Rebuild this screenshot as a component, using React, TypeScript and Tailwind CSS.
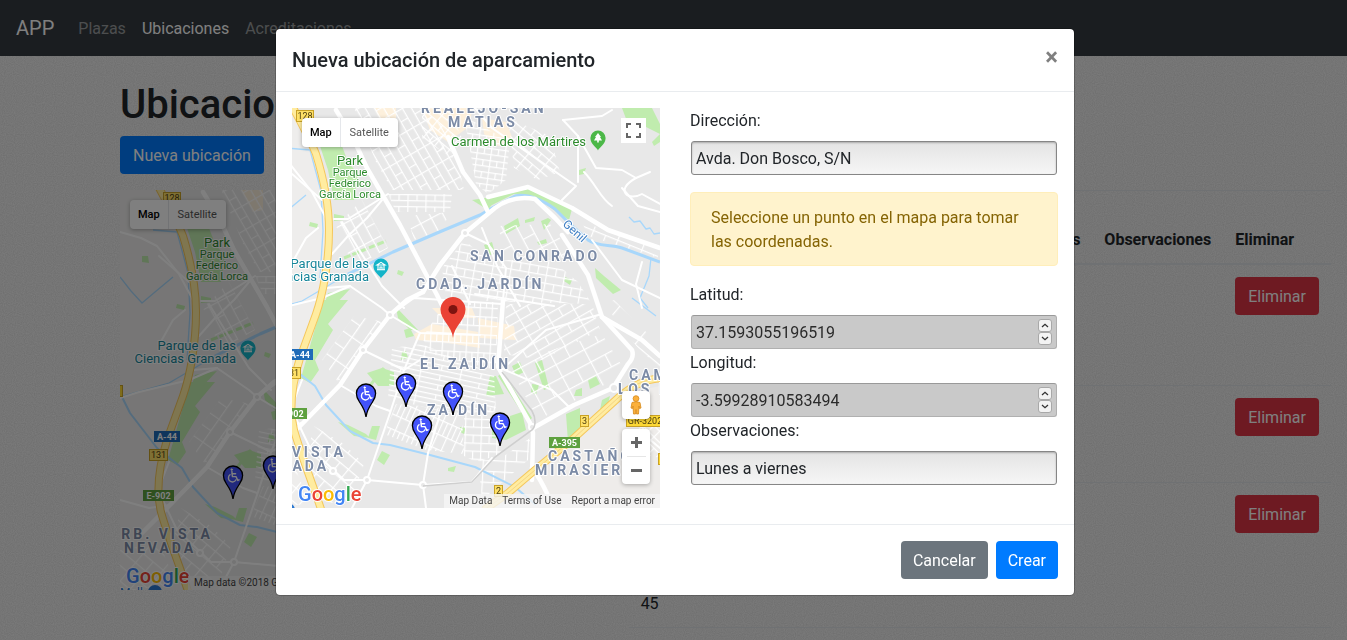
import React from "react";

type Pt = { x: number; y: number };

const streetBlocks = [
  { points: "62,0 130,0 150,18 165,50 172,82 100,82 84,54", angle: 60, w: 11, h: 8 },
  { points: "130,0 156,0 170,30 160,50 130,30", angle: 40, w: 7, h: 7 },
  { points: "96,86 160,86 158,104 104,104", angle: 1, w: 9, h: 6 },
  { points: "44,118 70,92 96,140 62,160", angle: 62, w: 14, h: 10 },
  { points: "115,108 160,104 146,124 122,132", angle: 62, w: 18, h: 12 },
  { points: "172,8 218,34 214,72 196,86 184,76", angle: 8, w: 7, h: 6 },
  { points: "216,10 258,28 268,64 246,72 222,60", angle: 40, w: 10, h: 7 },
  { points: "150,160 172,132 196,152 260,152 286,174 300,196 154,192", angle: 10, w: 9, h: 8 },
  { points: "206,118 258,116 282,150 214,150", angle: 62, w: 16, h: 13 },
  { points: "154,194 206,194 204,262 140,246 130,230", angle: 3, w: 6, h: 9 },
  { points: "214,196 300,196 308,222 250,252 212,246", angle: -30, w: 13, h: 9 },
  { points: "216,256 310,226 330,258 314,276 246,312", angle: -28, w: 16, h: 14 },
  { points: "100,240 130,236 202,266 204,304 160,306 96,290", angle: 12, w: 20, h: 5 },
  { points: "104,296 150,300 170,306 172,346 134,342 92,326", angle: 24, w: 5, h: 14 },
  { points: "172,300 200,300 210,346 184,354 172,348", angle: 2, w: 8, h: 8 },
  { points: "22,318 52,336 72,356 60,392 30,396 14,350", angle: 40, w: 11, h: 12 },
  { points: "30,252 62,208 92,214 68,246 46,274", angle: -55, w: 14, h: 12 },
  { points: "290,114 366,140 366,150 296,128", angle: 22, w: 13, h: 10 },
  { points: "342,310 368,318 368,350 352,346", angle: 45, w: 8, h: 8 },
  { points: "186,352 206,352 238,330 236,352 190,392", angle: 3, w: 11, h: 11 },
  { points: "312,196 322,192 368,238 368,260 346,240", angle: 40, w: 18, h: 20 },
  { points: "-39,360 0,352 18,396 -39,400", angle: 40, w: 13, h: 12 },
];

const greens = [
  "28,38 50,38 56,54 66,66 62,92 42,92 36,62",
  "31,192 56,192 36,216 41,222 23,252 27,262 18,275 9,270",
  "36,185 58,181 42,198 32,198",
  "75,265 90,260 102,264 102,278 86,278",
  "46,314 56,317 74,326 78,330 62,328",
  "80,318 88,318 84,332 76,330",
  "90,343 98,347 92,357 85,352",
  "104,199 126,222 118,222 106,210",
  "112,222 118,220 122,228 114,230",
  "110,244 114,243 116,250 109,252",
  "194,90 236,81 280,101 277,112 262,102 242,88 222,86 198,98",
  "212,118 226,110 228,118 214,126",
  "233,112 243,109 242,113 233,115",
  "249,113 256,110 259,112 252,122",
  "192,137 200,134 203,145 196,148",
  "245,134 254,131 255,135 247,137",
  "303,160 312,168 329,182 321,186 304,170",
  "273,169 280,172 278,177 272,173",
  "287,62 294,60 292,66 287,67",
  "330,0 360,0 368,16 368,26 352,18 336,16",
  "360,34 368,26 368,34 362,38",
  "220,258 228,254 232,264 224,268",
  "243,255 250,252 257,280 252,282",
  "240,276 247,277 244,287 239,284",
  "296,272 304,268 308,276 298,281",
  "284,282 290,280 290,288 282,288",
  "198,268 204,268 212,286 194,288",
  "211,264 240,310 236,314 206,268",
  "218,308 230,304 234,322 214,332 200,330 200,318 216,320",
  "274,306 288,300 288,310 296,320 276,334",
  "310,292 318,288 316,296 308,302",
  "168,319 174,320 172,326 168,324",
  "156,360 164,358 162,364 156,363",
  "42,106 52,108 52,112 42,113",
  "106,162 112,164 110,168 105,166",
  "-17,66 -11,66 -10,73 -17,72",
  "18,114 26,116 25,120 17,118",
];

const commercial = [
  "122,226 140,216 186,224 188,240 150,234 124,232",
  "82,0 104,0 104,20 94,22",
  "130,0 180,0 178,18 156,34 138,22",
  "190,10 214,14 222,34 206,38 192,26",
  "186,210 222,218 224,232 188,230",
  "140,200 180,200 184,210 150,210",
];

const mainRoads = [
  "M44,2 L61,30 L75,60 L108,117 L145,187 L158,214",
  "M156,29 L171,64 L188,87 L196,104",
  "M131,184 L115,192 L98,207 L71,242 L48,277 L11,315 L-20,346",
  "M131,184 L148,157 L173,125 L203,100 C214,92 228,88 243,91 L263,110 L276,124",
  "M196,89 L236,79 L280,100 L316,122 L368,140",
  "M270,127 L296,167 L306,197 L310,209 L340,242 C342,248 340,252 336,256 L321,280",
  "M211,192 L206,259 L238,315 L241,325 L240,372",
  "M321,280 L282,297 L243,319",
  "M310,209 L350,232 L368,248",
  "M240,360 C250,372 254,384 262,400",
];

const midRoads = [
  "M98,207 L128,225 L188,227",
  "M128,225 L112,262 L98,305 L75,372 L60,400",
  "M71,242 L112,262 L128,252",
  "M48,277 L84,298 L98,303",
  "M75,372 L131,377 L180,374 L200,350",
  "M136,345 L131,377 L134,400",
  "M34,180 L58,178 L90,200 L98,207",
  "M-39,208 L-20,202 L30,190 L58,178",
  "M42,111 L56,111 L96,86",
  "M40,146 L56,128 L75,110 L90,92",
  "M50,114 L66,140 L90,178 L112,200",
  "M173,125 L196,136 L214,160 L211,192",
  "M108,200 L122,190 L210,196",
  "M183,186 L262,198",
  "M216,256 L254,222 L310,206",
  "M206,259 L260,282 L278,300",
  "M-39,42 L-18,48 L-2,56 L20,84 L34,110",
  "M-39,310 L-10,318 L11,315",
  "M0,66 L30,92",
  "M0,155 L14,130 L26,120",
  "M160,158 L178,196",
  "M190,120 L206,160 L228,198",
  "M183,0 L200,20 L284,78 L270,92",
  "M271,12 L286,28 L286,74",
  "M271,12 L310,8 L320,2",
  "M286,28 L304,60 L330,62 L344,70 C322,82 336,94 350,86 L368,96",
  "M292,64 C304,76 308,90 320,98",
  "M344,70 L358,64 M330,80 L346,98 L368,104",
  "M150,300 L136,345",
  "M10,272 L-1,300 L18,340 L52,372 L75,372",
  "M350,154 L344,176 L350,200",
  "M322,280 L340,300 L356,330 L368,340",
  "M300,132 L330,172 L368,190",
];

const labels = [
  { text: "REALEJO-SAN", x: 129, y: 5 },
  { text: "MATIAS", x: 156, y: 19 },
  { text: "SAN CONRADO", x: 178, y: 153 },
  { text: "CDAD. JARDÍN", x: 124, y: 181 },
  { text: "EL ZAIDÍN", x: 128, y: 261 },
  { text: "ZAIDÍN", x: 135, y: 307 },
  { text: "URB. VISTA", x: -50, y: 349 },
  { text: "NEVADA", x: -35, y: 363 },
  { text: "CASTAÑO", x: 256, y: 353 },
  { text: "MIRASIERRA", x: 243, y: 367 },
  { text: "CAMINO", x: 337, y: 272 },
  { text: "LOS LLANOS", x: 326, y: 286 },
];

const shields = [
  { text: "128", x: 4, y: 2, w: 18, kind: "yellow" },
  { text: "131", x: -10, y: 259, w: 19, kind: "yellow" },
  { text: "3", x: 288, y: 307, w: 9, kind: "yellow" },
  { text: "2", x: 202, y: 377, w: 9, kind: "yellow" },
  { text: "GR-3202", x: 334, y: 307, w: 38, kind: "gold" },
  { text: "", x: 366, y: 345, w: 20, kind: "gold" },
  { text: "", x: -56, y: 195, w: 20, kind: "gold" },
  { text: "A-44", x: -5, y: 241, w: 26, kind: "blue" },
  { text: "E-902", x: -16, y: 300, w: 31, kind: "green" },
  { text: "A-395", x: 257, y: 329, w: 31, kind: "green" },
];

const shieldFill: Record<string, string> = {
  yellow: "#ffe168",
  gold: "#fdd835",
  blue: "#1f6bb8",
  green: "#5ea13f",
};

const parkings: Pt[] = [
  { x: 74, y: 309 },
  { x: 114, y: 299 },
  { x: 161, y: 307 },
  { x: 130, y: 341 },
  { x: 208, y: 338 },
];

function ParkingPin({ x, y }: Pt) {
  return (
    <g transform={`translate(${x} ${y})`}>
      <path
        d="M0,0 C-0.8,-6 -3,-10 -6.5,-15 C-8.6,-18 -9.6,-20.4 -9.6,-23.4 A9.6,9.6 0 0 1 9.6,-23.4 C9.6,-20.4 8.6,-18 6.5,-15 C3,-10 0.8,-6 0,0 Z"
        fill="#4353fb"
        stroke="#000"
        strokeWidth="1.3"
      />
      <g fill="none" stroke="#fff" strokeWidth="1.4" strokeLinecap="round" strokeLinejoin="round">
        <circle cx="-1.3" cy="-29.4" r="0.9" fill="#fff" strokeWidth="0.6" />
        <path d="M-1.1,-27.6 L-0.6,-22.4 L3,-22.4 L4.8,-18.6 L6,-19.2" />
        <path d="M-0.8,-25.2 L2.6,-25.2" />
        <path d="M-3,-24.2 A4,4 0 1 0 3,-19.2" />
      </g>
    </g>
  );
}

function PoiPin({ x, y, color, tree }: Pt & { color: string; tree?: boolean }) {
  return (
    <g transform={`translate(${x} ${y})`}>
      <path
        d="M0,11.500 C-1,8.500 -7.600,5.500 -7.600,-1 A7.600,7.600 0 0 1 7.600,-1 C7.600,5.500 1,8.500 0,11.500 Z"
        fill={color}
      />
      {tree ? (
        <path d="M0,-6 L3,-2 L2,-2 L4,1.500 L0.800,1.500 L0.800,3.500 L-0.800,3.500 L-0.800,1.500 L-4,1.500 L-2,-2 L-3,-2 Z" fill="#fff" />
      ) : (
        <path
          d="M-4,-2 L0,-4.600 L4,-2 Z M-3,-2 L-3,2.500 M3,-2 L3,2.500 M-4,2.800 L4,2.800 M-1,2.500 L-1,0 L1,0 L1,2.500"
          fill="none"
          stroke="#fff"
          strokeWidth="1.1"
        />
      )}
    </g>
  );
}

function MapDefs() {
  return (
    <svg width="0" height="0" className="absolute" aria-hidden="true">
      <defs>
        {streetBlocks.map((b, i) => (
          <pattern
            key={i}
            id={`streets-${i}`}
            width={b.w * 2}
            height={b.h * 2}
            patternUnits="userSpaceOnUse"
            patternTransform={`rotate(${b.angle})`}
          >
            <path
              d={`M0,0.6 H${b.w * 2} M0,${b.h + 0.6} H${b.w * 2} M0.6,0 V${b.h} M${b.w + 0.6},0 V${b.h * 2}`}
              stroke="#fff"
              strokeWidth="1.2"
              fill="none"
            />
          </pattern>
        ))}
      </defs>
    </svg>
  );
}

function CityMap({ left, selected }: { left: number; selected?: Pt }) {
  return (
    <svg
      viewBox={`${left} 0 368 400`}
      preserveAspectRatio="xMinYMin meet"
      className="block h-full w-full"
      fontFamily="Roboto, sans-serif"
      role="img"
      aria-label="Mapa"
    >
      <rect x="-60" y="0" width="1200" height="400" fill="#e8e8e8" />
      <path d="M-60,0 L0,0 L21,40 L35,90 L36,150 L18,235 L2,272 L0,320 L24,400 L-60,400 Z" fill="#eeedec" />
      <path d="M368,278 L340,284 L243,366 L214,394 L240,400 L368,400 Z" fill="#eeecea" />
      {commercial.map((p) => (
        <polygon key={p} points={p} fill="#fdf0dc" />
      ))}
      {greens.map((p) => (
        <polygon key={p} points={p} fill="#c0ecae" />
      ))}
      <path d="M52,150 L94,133 M72,285 L92,260" stroke="#c0ecae" strokeWidth="3" strokeDasharray="7 2" fill="none" />
      {streetBlocks.map((b, i) => (
        <polygon key={i} points={b.points} fill={`url(#streets-${i})`} />
      ))}
      <g fill="none" stroke="#a8d7fb" strokeLinejoin="round">
        <path strokeWidth="3" d="M56,166 L101,144 L145,125 L188,107 L200,100 L223,88 C236,85 250,92 263,101 L276,114 L296,132 C306,139 318,136 330,140 L368,154" />
        <path strokeWidth="2" d="M-39,203 L-29,223 L-2,258 L23,278 L34,297 L58,323 L81,335 L98,337 L138,347 L183,359 L223,379 L244,397" />
        <path strokeWidth="1.300" d="M-39,87 L-28,101 L-17,113 L-4,102 L14,87 M-6,40 L18,42 L29,83 L31,123 L28,170 M-39,207 L10,193 L56,166" />
        <path strokeWidth="1.300" d="M337,109 L342,114 L348,113 L354,121 L358,120 L362,126 L368,125 M359,150 L357,168 L348,190 L356,200 M340,190 L364,208" />
      </g>
      <path d="M180,92 L206,88 L196,102 Z" fill="#c0ecae" />
      <g fill="none" stroke="#fff" strokeLinejoin="round" strokeLinecap="round">
        {midRoads.map((d) => (
          <path key={d} d={d} strokeWidth="2" />
        ))}
        {mainRoads.map((d) => (
          <path key={d} d={d} strokeWidth="4.500" />
        ))}
      </g>
      <g fill="#e8e8e8" stroke="#fff" strokeWidth="2">
        <circle cx="173" cy="125" r="3" />
        <circle cx="98" cy="207" r="3" />
        <circle cx="71" cy="242" r="3" />
        <circle cx="75" cy="372" r="3" />
        <circle cx="131" cy="377" r="3" />
        <circle cx="41" cy="363" r="3" />
        <circle cx="322" cy="280" r="4" />
        <circle cx="240" cy="319" r="3" />
      </g>
      <path d="M131,378 L180,374 L203,349 L240,322 C244,318 244,310 240,303 L210,264" fill="none" stroke="#cfcfcf" strokeWidth="1.600" />
      <g fill="none" strokeLinejoin="round">
        <path d="M-1,-4 C12,20 20,36 24,46 C32,72 37,100 37,122 C37,154 31,186 24,206 L8,250 C0,276 -3,302 2,322 C8,344 22,380 30,404" stroke="#f5c75b" strokeWidth="8" />
        <path d="M-1,-4 C12,20 20,36 24,46 C32,72 37,100 37,122 C37,154 31,186 24,206 L8,250 C0,276 -3,302 2,322 C8,344 22,380 30,404" stroke="#ffeca0" strokeWidth="6" />
        <path d="M372,270 C352,270 338,279 326,290 L283,329 L243,362 L216,385 L192,402" stroke="#f5c75b" strokeWidth="8" />
        <path d="M372,270 C352,270 338,279 326,290 L283,329 L243,362 L216,385 L192,402" stroke="#ffeca0" strokeWidth="6" />
        <path d="M372,270 C352,270 338,279 326,290 L283,329 L243,362 L216,385 L192,402" stroke="#f5d483" strokeWidth="1" />
      </g>
      {shields.map((s, i) => (
        <g key={i}>
          <rect
            x={s.x + 0.5}
            y={s.y + 0.5}
            width={s.w - 1}
            height={s.kind === "blue" || s.kind === "green" ? 10 : 11}
            fill={shieldFill[s.kind]}
            stroke={s.kind === "yellow" || s.kind === "gold" ? "#c9a227" : shieldFill[s.kind]}
          />
          <text
            x={s.x + s.w / 2}
            y={s.y + 9}
            textAnchor="middle"
            fontSize="9"
            fontWeight={s.kind === "blue" || s.kind === "green" ? 700 : 400}
            fill={s.kind === "blue" || s.kind === "green" ? "#fff" : "#4a3c10"}
          >
            {s.text}
          </text>
        </g>
      ))}
      <g stroke="#fff" strokeWidth="2" strokeLinejoin="round" paintOrder="stroke">
        <g fontSize="14" fontWeight="700" fill="#7c8ba6" className="tracking-[3px]">
          {labels.map((l) => (
            <text key={l.text} x={l.x} y={l.y}>
              {l.text}
            </text>
          ))}
        </g>
        <g textAnchor="middle" fill="#2c8a2c" fontSize="11">
          <text x="58" y="57" fontSize="13">Park</text>
          <text x="58" y="68">Parque</text>
          <text x="58" y="79">Federico</text>
          <text x="58" y="90">García Lorca</text>
        </g>
        <text x="294" y="38" textAnchor="end" fill="#2c8a2c" fontSize="13">Carmen de los Mártires</text>
        <g textAnchor="end" fill="#16869a" fontSize="13">
          <text x="77" y="160">Parque de las</text>
          <text x="77" y="173">Ciencias Granada</text>
        </g>
        <text transform="translate(270 117) rotate(42)" fill="#3f7fc4" fontSize="12">Genil</text>
        <text x="-39" y="407" fill="#2b78d0" fontSize="12">Mall</text>
      </g>
      <PoiPin x={306} y={31} color="#4cb848" tree />
      <PoiPin x={89} y={159} color="#14b4c8" />
      <circle cx="-4" cy="402" r="7" fill="#2b78d0" />
      <path d="M-7,400 H-1 V404 H-7 Z" fill="#fff" />
      {parkings.map((p) => (
        <ParkingPin key={`${p.x}-${p.y}`} {...p} />
      ))}
      {selected && (
        <g transform={`translate(${selected.x} ${selected.y})`}>
          <path
            d="M0,0 C-1,-12 -12.500,-18 -12.500,-28.500 A12.500,12.500 0 0 1 12.500,-28.500 C12.500,-18 1,-12 0,0 Z"
            fill="#ea4335"
          />
          <circle cx="0" cy="-28.500" r="4.500" fill="#7e1410" />
        </g>
      )}
      <text
        x={left + 6}
        y="393"
        fontSize="20"
        fontWeight="500"
        stroke="#fff"
        strokeWidth="2"
        strokeLinejoin="round"
        paintOrder="stroke"
      >
        <tspan fill="#4285f4">G</tspan>
        <tspan fill="#ea4335">o</tspan>
        <tspan fill="#fbbc05">o</tspan>
        <tspan fill="#4285f4">g</tspan>
        <tspan fill="#34a853">l</tspan>
        <tspan fill="#ea4335">e</tspan>
      </text>
    </svg>
  );
}

function MapTypeSwitch() {
  return (
    <div className="absolute left-[10px] top-[10px] flex rounded-sm bg-white text-[11px] leading-[13px] shadow-[0_1px_4px_rgba(0,0,0,0.3)]">
      <button type="button" className="p-2 font-medium text-black">
        Map
      </button>
      <button type="button" className="w-[58px] border-l border-gray-200 py-2 text-center text-[#565656]">
        Satellite
      </button>
    </div>
  );
}

function MapControls() {
  return (
    <>
      <button
        type="button"
        aria-label="Pantalla completa"
        className="absolute right-[14px] top-[10px] flex size-[25px] items-center justify-center bg-white"
      >
        <svg width="15" height="15" viewBox="0 0 15 15" fill="none" stroke="#666" strokeWidth="2">
          <path d="M1,5 V1 H5 M10,1 H14 V5 M14,10 V14 H10 M5,14 H1 V10" />
        </svg>
      </button>
      <div className="absolute right-[10px] bottom-6 flex w-7 flex-col gap-[10px]">
        <button
          type="button"
          aria-label="Street View"
          className="flex size-7 items-center justify-center rounded-sm bg-white shadow-[0_1px_4px_rgba(0,0,0,0.3)]"
        >
          <svg width="14" height="20" viewBox="0 0 14 20">
            <path d="M3,7.500 Q7,5.800 11,7.500 L12,13 L10.500,13.500 L10,11 L9.500,19 H7.500 L7,14.500 L6.500,19 H4.500 L4,11 L3.500,13.500 L2,13 Z" fill="#fbb03b" stroke="#d5891b" strokeWidth="0.800" />
            <circle cx="7" cy="3.600" r="2.900" fill="#fbb03b" stroke="#d5891b" strokeWidth="0.800" />
          </svg>
        </button>
        <div className="flex flex-col items-center rounded-sm bg-white shadow-[0_1px_4px_rgba(0,0,0,0.3)]">
          <button type="button" aria-label="Acercar" className="flex size-[27px] items-center justify-center">
            <svg width="11" height="11" viewBox="0 0 11 11" stroke="#666" strokeWidth="3">
              <path d="M0,5.500 H11 M5.500,0 V11" />
            </svg>
          </button>
          <div className="h-px w-[19px] bg-[#e6e6e6]" />
          <button type="button" aria-label="Alejar" className="flex size-[27px] items-center justify-center">
            <svg width="11" height="11" viewBox="0 0 11 11" stroke="#666" strokeWidth="3">
              <path d="M0,5.500 H11" />
            </svg>
          </button>
        </div>
      </div>
      <div className="absolute right-0 bottom-0 flex bg-[#f5f5f5]/80 text-[10px] leading-[14px] text-[#444]">
        <span className="px-[5px]">Map Data</span>
        <a href="#terminos" className="px-[5px]">Terms of Use</a>
        <a href="#error" className="px-[5px]">Report a map error</a>
      </div>
    </>
  );
}

const textInput =
  "block h-[34px] w-full rounded-[3px] border border-[#868686] bg-linear-to-b from-[#e4e4e4] to-[#f6f6f6] px-1 text-[#212529] shadow-[inset_0_1px_2px_rgba(0,0,0,0.25)] outline-none";
const numberInput =
  "block h-[34px] w-full appearance-none rounded-[3px] border border-[#b0b0b0] border-t-[#999] bg-[#c9c9c9] px-1 text-[#2b2b2b] outline-none [-moz-appearance:textfield] [&::-webkit-inner-spin-button]:appearance-none";

function NumberField({ id, label, value }: { id: string; label: string; value: string }) {
  const step =
    "flex h-[13px] w-[14px] items-center justify-center rounded-[3px] border border-[#a8a8a8] bg-[#f3f3f3]";
  return (
    <div>
      <label htmlFor={id} className="mb-[6px] block leading-[26px]">
        {label}
      </label>
      <div className="relative p-px">
        <input id={id} type="number" step="any" readOnly defaultValue={value} className={numberInput} />
        <div className="absolute top-[5px] right-[6px] flex flex-col">
          <button type="button" aria-label="Aumentar" className={step}>
            <svg width="8" height="5" viewBox="0 0 8 5" fill="none" stroke="#333" strokeWidth="1.300">
              <path d="M1,4 L4,1.300 L7,4" />
            </svg>
          </button>
          <button type="button" aria-label="Disminuir" className={step}>
            <svg width="8" height="5" viewBox="0 0 8 5" fill="none" stroke="#333" strokeWidth="1.300">
              <path d="M1,1 L4,3.700 L7,1" />
            </svg>
          </button>
        </div>
      </div>
    </div>
  );
}

function TextField({ id, label, value }: { id: string; label: string; value: string }) {
  return (
    <div>
      <label htmlFor={id} className="mb-[6px] block leading-[26px]">
        {label}
      </label>
      <div className="p-px">
        <input id={id} type="text" defaultValue={value} className={textInput} />
      </div>
    </div>
  );
}

const buttonBase = "block rounded px-3 pt-[8px] pb-[6px] text-white";

function DeleteButton() {
  return (
    <button type="button" className="block rounded bg-[#dc3545] px-[13px] pt-[8px] pb-[6px] text-white">
      Eliminar
    </button>
  );
}

function LocationsTable() {
  const rows = [
    { address: "", height: "h-[121px]" },
    { address: "", height: "h-[97px]" },
    { address: "45", height: "h-[145px]" },
    { address: "", height: "h-[121px]" },
  ];
  return (
    <table className="w-full border-collapse text-left">
      <thead>
        <tr className="border-t border-b-2 border-[#dee2e6] align-bottom">
          <th className="w-full px-3 pt-[13px] pb-[11px]">Dirección</th>
          <th className="px-3 pt-[13px] pb-[11px]">
            Plazas
            <br />
            disponibles
          </th>
          <th className="px-3 pt-[13px] pb-[11px]">Observaciones</th>
          <th className="px-3 pt-[13px] pb-[11px]">Eliminar</th>
        </tr>
      </thead>
      <tbody>
        {rows.map((row, i) => (
          <tr key={i} className={`${row.height} border-b border-[#dee2e6] align-top`}>
            <td className="px-3 pt-[13px] pb-[11px] align-bottom">{row.address}</td>
            <td className="p-3" />
            <td className="p-3" />
            <td className="p-3">
              <DeleteButton />
            </td>
          </tr>
        ))}
      </tbody>
    </table>
  );
}

function Paper() {
  return (
    <svg className="absolute inset-0 -z-10 h-full w-full" aria-hidden="true">
      <filter id="paper" x="0" y="0" width="100%" height="100%" colorInterpolationFilters="sRGB">
        <feTurbulence type="fractalNoise" baseFrequency="0.9" numOctaves="1" seed="4" />
        <feColorMatrix values="0.14 0 0 0 0.85  0.14 0 0 0 0.85  0.14 0 0 0 0.85  0 0 0 0 1" />
      </filter>
      <rect width="100%" height="100%" filter="url(#paper)" />
    </svg>
  );
}

export default function App() {
  return (
    <div className="relative isolate h-screen overflow-hidden bg-[#ebebeb] font-[Roboto,sans-serif] text-base leading-6 text-[#212529]">
      <Paper />
      <MapDefs />
      <nav className="flex items-center bg-[#343a40] px-4 py-2">
        <a href="#inicio" className="mr-4 py-[5px] text-xl leading-[30px] text-white">
          APP
        </a>
        <a href="#plazas" className="px-2 pt-[9px] pb-[7px] text-white/50">Plazas</a>
        <a href="#ubicaciones" className="px-2 pt-[9px] pb-[7px] text-white">Ubicaciones</a>
        <a href="#acreditaciones" className="px-2 pt-[9px] pb-[7px] text-white/50">Acreditaciones</a>
      </nav>

      <main className="pt-6 pr-4 pl-[120px]">
        <h1 className="mb-[6px] text-[40px] leading-[50px] font-medium">Ubicaciones</h1>
        <button type="button" className="mb-4 block rounded bg-[#007bff] px-[13px] pt-[8px] pb-[6px] text-white">
          Nueva ubicación
        </button>
        <div className="flex items-start gap-8">
          <div className="relative h-[400px] flex-1 overflow-hidden">
            <CityMap left={-39} />
            <MapTypeSwitch />
            <div className="absolute right-0 bottom-0 left-[68px] bg-[#f5f5f5]/80 px-[6px] text-[10px] leading-[14px] text-[#444]">
              Map data ©2018 Google
            </div>
          </div>
          <div className="w-[58%]">
            <LocationsTable />
          </div>
        </div>
      </main>

      <div className="fixed inset-0 bg-black/50" />

      <div className="fixed inset-0 flex items-start justify-center overflow-auto py-7 pl-[3px]">
        <section
          role="dialog"
          aria-modal="true"
          aria-labelledby="modal-title"
          className="w-full max-w-[800px] rounded-[5px] border border-black/20 bg-white bg-clip-padding"
        >
          <header className="flex items-start justify-between border-b border-[#e9ecef] p-4">
            <h2 id="modal-title" className="text-xl leading-[30px] font-medium">
              Nueva ubicación de aparcamiento
            </h2>
            <button type="button" aria-label="Cerrar" className="text-2xl leading-6 font-bold text-black/50">
              ×
            </button>
          </header>

          <div className="grid grid-cols-2 gap-[30px] p-4">
            <div className="relative h-[400px] overflow-hidden">
              <CityMap left={0} selected={{ x: 161, y: 230 }} />
              <MapTypeSwitch />
              <MapControls />
            </div>
            <form>
              <TextField id="direccion" label="Dirección:" value="Avda. Don Bosco, S/N" />
              <p className="my-4 rounded border border-[#ffeeba] bg-[#fff3cd] px-5 pt-[13px] pb-[11px] text-[#856404]">
                Seleccione un punto en el mapa para tomar las coordenadas.
              </p>
              <NumberField id="latitud" label="Latitud:" value="37.1593055196519" />
              <NumberField id="longitud" label="Longitud:" value="-3.59928910583494" />
              <TextField id="observaciones" label="Observaciones:" value="Lunes a viernes" />
            </form>
          </div>

          <footer className="flex justify-end gap-2 border-t border-[#e9ecef] p-4">
            <button type="button" className={`${buttonBase} bg-[#6c757d]`}>
              Cancelar
            </button>
            <button type="button" className={`${buttonBase} bg-[#007bff]`}>
              Crear
            </button>
          </footer>
        </section>
      </div>
    </div>
  );
}
